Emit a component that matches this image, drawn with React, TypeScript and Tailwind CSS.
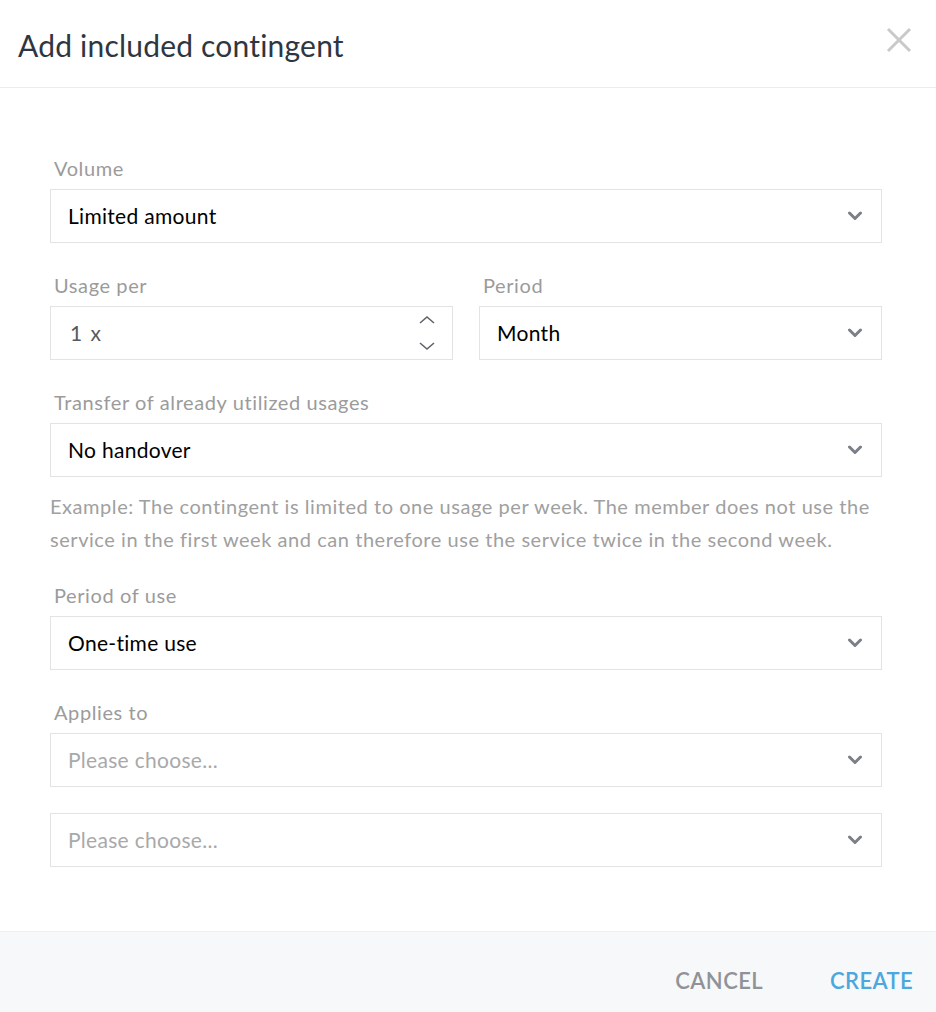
import React from 'react'

const font = { fontFamily: 'Lato, "Liberation Sans", sans-serif' }

const Chevron = () => (
  <svg width="16" height="10" viewBox="0 0 16 10" className="shrink-0">
    <polyline points="2.5,2 8,7.5 13.5,2" fill="none" stroke="#7b8087" strokeWidth="3" strokeLinecap="round" strokeLinejoin="round" />
  </svg>
)

const Label = ({ children }: { children: React.ReactNode }) => (
  <div className="pl-1 text-[20px] leading-[30px] tracking-[0.6px] text-[#9b9b9b] mb-[6px]">{children}</div>
)

const Select = ({ value, placeholder }: { value?: string; placeholder?: string }) => (
  <div className="h-[54px] border border-[#e3e3e3] bg-white flex items-center justify-between pl-[17px] pr-[18px]">
    {value ? (
      <span className="text-[21px] tracking-[0.3px] text-black">{value}</span>
    ) : (
      <span className="text-[21px] tracking-[0.3px] text-[#a9a9a9]">{placeholder}</span>
    )}
    <Chevron />
  </div>
)

export default function App() {
  return (
    <div className="w-[936px] h-[1012px] bg-white flex flex-col" style={font}>
      {/* Header */}
      <div className="h-[88px] border-b border-[#ececec] flex items-center justify-between pl-[18px] pr-[24px] shrink-0">
        <h1 className="text-[30px] tracking-[0.2px] text-[#2e3640] pt-[3px]">Add included contingent</h1>
        <svg width="26" height="26" viewBox="0 0 26 26" className="mb-[8px]">
          <path d="M2 2 L24 24 M24 2 L2 24" stroke="#c9c9c9" strokeWidth="3" />
        </svg>
      </div>

      {/* Body */}
      <div className="flex-1 pl-[50px] pr-[54px] pt-[65px]">
        <Label>Volume</Label>
        <Select value="Limited amount" />

        <div className="grid grid-cols-2 gap-[26px] mt-[27px]">
          <div>
            <Label>Usage per</Label>
            <div className="h-[54px] border border-[#e3e3e3] flex items-center justify-between pl-[19px] pr-[16px]">
              <span className="text-[21px] text-[#555a60] tracking-[1.5px]">1 x</span>
              <div className="flex flex-col gap-[16px]">
                <svg width="18" height="10" viewBox="0 0 18 10">
                  <polyline points="2,8 9,2 16,8" fill="none" stroke="#5f646a" strokeWidth="1.6" />
                </svg>
                <svg width="18" height="10" viewBox="0 0 18 10">
                  <polyline points="2,2 9,8 16,2" fill="none" stroke="#5f646a" strokeWidth="1.6" />
                </svg>
              </div>
            </div>
          </div>
          <div>
            <Label>Period</Label>
            <Select value="Month" />
          </div>
        </div>

        <div className="mt-[27px]">
          <Label>Transfer of already utilized usages</Label>
          <Select value="No handover" />
        </div>

        <p className="mt-[13px] text-[20px] leading-[33px] tracking-[0.55px] text-[#a0a0a0]">
          Example: The contingent is limited to one usage per week. The member does not use the service in the first week and can therefore use the service twice in the second week.
        </p>

        <div className="mt-[24px]">
          <Label>Period of use</Label>
          <Select value="One-time use" />
        </div>

        <div className="mt-[27px]">
          <Label>Applies to</Label>
          <Select placeholder="Please choose..." />
          <div className="mt-[26px]">
            <Select placeholder="Please choose..." />
          </div>
        </div>
      </div>

      {/* Footer */}
      <div className="h-[81px] bg-[#f7f8fa] border-t border-[#efefef] flex items-center justify-end gap-[67px] pr-[23px] pt-[17px] shrink-0">
        <button className="text-[22px] font-semibold text-[#8f9398] tracking-[0.4px]">CANCEL</button>
        <button className="text-[22px] font-semibold text-[#4ba7dd] tracking-[0.4px]">CREATE</button>
      </div>
    </div>
  )
}
